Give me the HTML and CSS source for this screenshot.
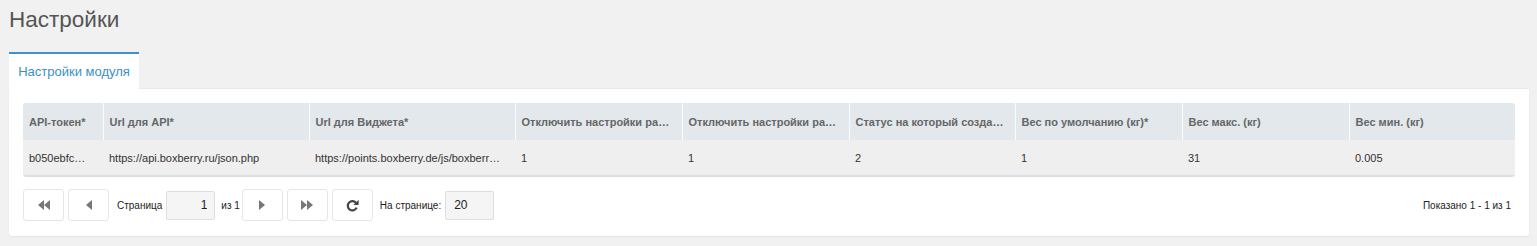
FILE: index.html
```html
<!DOCTYPE html>
<html lang="ru">
<head>
    <meta charset="UTF-8">
    <meta name="viewport" content="width=device-width, initial-scale=1.0">
    <link rel="stylesheet" href="styles.css">
    <title>Настройки</title>
</head>
<body>
    <div class="page">
        <h1 class="page-title">Настройки</h1>

        <div class="tabs">
            <div class="tab active">Настройки модуля</div>
        </div>

        <div class="panel">
            <div class="grid">
                <table>
                    <colgroup>
                        <col style="width: 80px">
                        <col style="width: 206px">
                        <col style="width: 206px">
                        <col style="width: 167px">
                        <col style="width: 167px">
                        <col style="width: 166px">
                        <col style="width: 167px">
                        <col style="width: 167px">
                        <col>
                    </colgroup>
                    <thead>
                        <tr>
                            <th>API-токен*</th>
                            <th>Url для API*</th>
                            <th>Url для Виджета*</th>
                            <th>Отключить настройки размеров</th>
                            <th>Отключить настройки расчета</th>
                            <th>Статус на который создается заказ</th>
                            <th>Вес по умолчанию (кг)*</th>
                            <th>Вес макс. (кг)</th>
                            <th>Вес мин. (кг)</th>
                        </tr>
                    </thead>
                    <tbody>
                        <tr>
                            <td>b050ebfc7d21a4e90c</td>
                            <td>https://api.boxberry.ru/json.php</td>
                            <td>https://points.boxberry.de/js/boxberry.js</td>
                            <td>1</td>
                            <td>1</td>
                            <td>2</td>
                            <td>1</td>
                            <td>31</td>
                            <td>0.005</td>
                        </tr>
                    </tbody>
                </table>
            </div>

            <div class="pager">
                <button class="pager-btn" type="button">
                    <svg width="12" height="10" viewBox="0 0 12 10"><path d="M6 0 L0 5 L6 10 Z M12 0 L6 5 L12 10 Z" fill="#777"/></svg>
                </button>
                <button class="pager-btn" type="button">
                    <svg width="6" height="10" viewBox="0 0 6 10"><path d="M6 0 L0 5 L6 10 Z" fill="#777"/></svg>
                </button>
                <span class="pager-text first">Страница</span>
                <input class="pager-input page-num" type="text" value="1">
                <span class="pager-text of">из 1</span>
                <button class="pager-btn" type="button">
                    <svg width="6" height="10" viewBox="0 0 6 10"><path d="M0 0 L6 5 L0 10 Z" fill="#777"/></svg>
                </button>
                <button class="pager-btn" type="button">
                    <svg width="12" height="10" viewBox="0 0 12 10"><path d="M0 0 L6 5 L0 10 Z M6 0 L12 5 L6 10 Z" fill="#777"/></svg>
                </button>
                <button class="pager-btn" type="button">
                    <svg width="13" height="13" viewBox="0 0 13 13"><path d="M10.2 4.2 A4.6 4.6 0 1 0 10.6 8.6" fill="none" stroke="#444" stroke-width="2.2"/><path d="M12.6 0.8 L12.6 6 L7.4 6 Z" fill="#444"/></svg>
                </button>
                <span class="pager-text per">На странице:</span>
                <input class="pager-input per-page" type="text" value="20">
                <span class="pager-info">Показано 1 - 1 из 1</span>
            </div>
        </div>
    </div>
</body>
</html>
```

FILE: styles.css
```css
body {
    margin: 0;
    padding: 0;
    background-color: #f1f1f1;
    font-family: 'Liberation Sans', Arial, sans-serif;
    color: #333;
}

.page {
    padding: 0 8px 10px 9px;
}

.page-title {
    margin: 0;
    padding-top: 5px;
    font-size: 22.5px;
    font-weight: normal;
    line-height: 30px;
    color: #555;
}

.tabs {
    display: flex;
    margin-top: 17px;
}

.tab {
    width: 130px;
    height: 35px;
    line-height: 35px;
    box-sizing: border-box;
    text-align: center;
    font-size: 13px;
    color: #3a8fcb;
    background-color: #fff;
    border-top: 2px solid #3893d0;
}

.tab.active {
    height: 37px;
}

.panel {
    background-color: #fff;
    padding: 14px 14px 15px 14px;
    border-radius: 0 0 3px 3px;
    box-shadow: 0 1px 2px rgba(0, 0, 0, 0.06), 0 -1px 1px rgba(0, 0, 0, 0.03);
}

.grid {
    border-radius: 3px;
    overflow: hidden;
    border-bottom: 2px solid #dcdfe2;
}

table {
    width: 100%;
    border-collapse: collapse;
    table-layout: fixed;
    font-size: 11px;
}

th,
td {
    padding: 0 14px 0 6px;
    text-align: left;
    white-space: nowrap;
    overflow: hidden;
    text-overflow: ellipsis;
}

th {
    height: 37px;
    padding-right: 10px;
    background-color: #e3e8ec;
    color: #666;
    font-weight: bold;
    border-left: 1px solid #fafbfc;
}

th:first-child {
    border-left: none;
}

td {
    height: 35px;
    background-color: #efefef;
    color: #333;
}

.pager {
    display: flex;
    align-items: center;
    margin-top: 12px;
    font-size: 10px;
    color: #222;
}

.pager-btn {
    width: 41px;
    height: 32px;
    margin-right: 4px;
    padding: 0;
    display: flex;
    align-items: center;
    justify-content: center;
    background-color: #fff;
    border: 1px solid #e6e6e6;
    border-radius: 3px;
}

.pager-text.first {
    margin-left: 4px;
    margin-right: 4px;
}

.pager-text.of {
    margin-left: 6px;
    margin-right: 2px;
}

.pager-text.per {
    margin-left: 3px;
    margin-right: 4px;
}

.pager-input {
    height: 29px;
    box-sizing: border-box;
    width: 49px;
    background-color: #f5f5f5;
    border: 1px solid #dedede;
    border-radius: 2px;
    font-family: 'Liberation Sans', Arial, sans-serif;
    font-size: 12px;
    color: #222;
}

.page-num {
    text-align: right;
    padding-right: 7px;
}

.per-page {
    padding-left: 8px;
}

.pager-info {
    margin-left: auto;
    margin-right: 4px;
}
```
